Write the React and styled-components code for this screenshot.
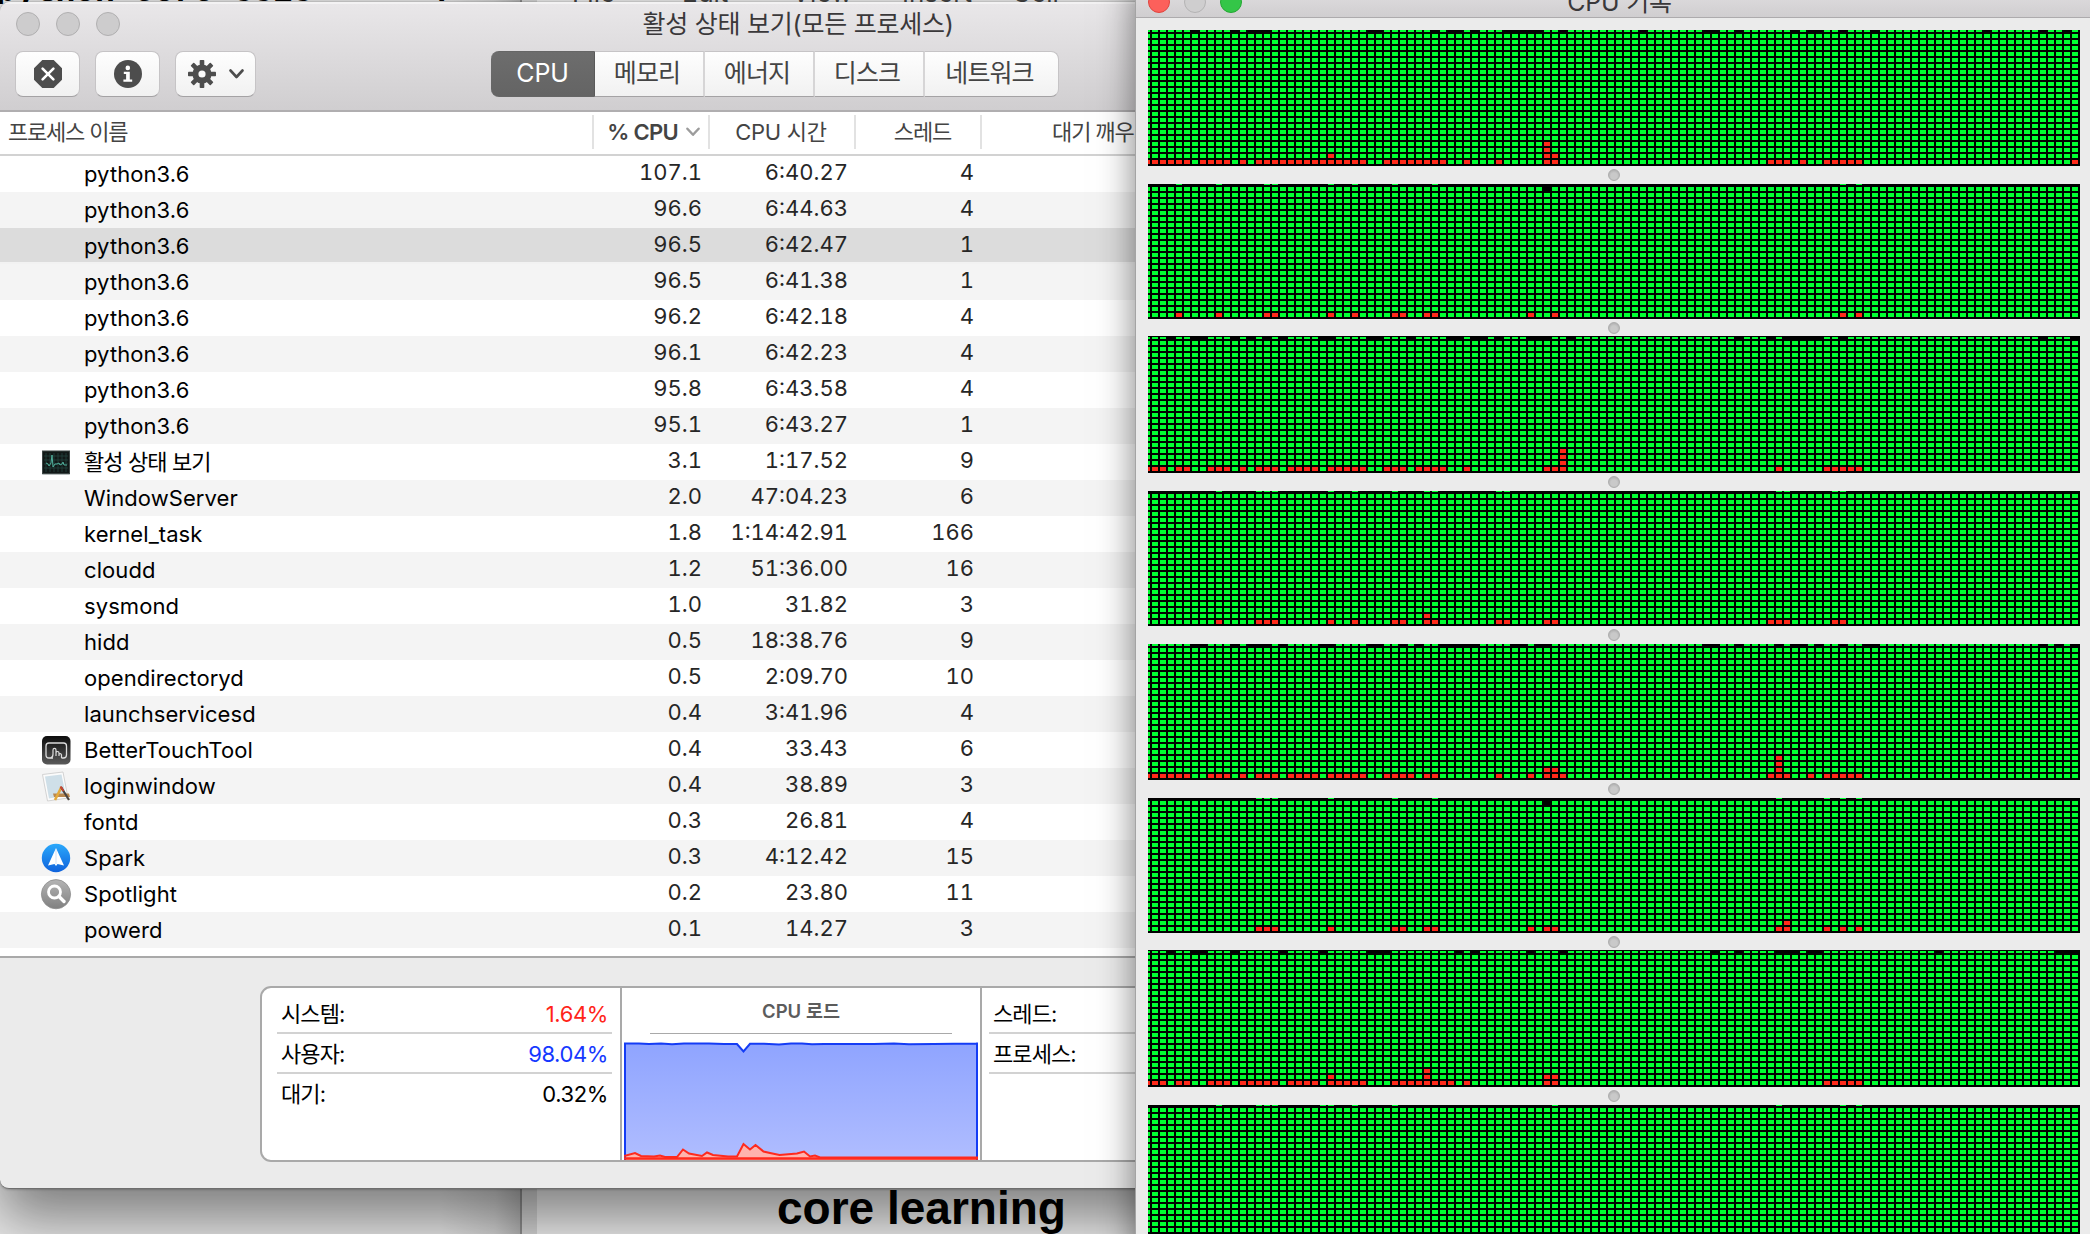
import React from "react";
import styled, { createGlobalStyle, css } from "styled-components";

const GlobalStyle = createGlobalStyle`
  *, *::before, *::after { box-sizing: border-box; }
  html, body { margin: 0; padding: 0; width: 2090px; height: 1234px; overflow: hidden; }
  body { font-family: Inter, "Noto Sans CJK KR", sans-serif; color: #000; }
`;

/* ---------- desktop and the pages behind the windows ---------- */

const Desktop = styled.div`
  position: relative;
  display: flex;
  width: 2090px;
  height: 1234px;
  overflow: hidden;
  background: #dedede;
`;

const BackPage = styled.div`
  display: flex;
  flex-direction: column;
  justify-content: space-between;
  width: 522px;
  flex: none;
  background: linear-gradient(90deg, #e8e8e8 0 440px, #d2d2d2 495px, #b4b4b4 521px);
  border-right: 2px solid #8d8d8d;
`;

const BackText = styled.div`
  height: 4px;
  margin-left: -4px;
  overflow: hidden;
  white-space: pre;
  font: bold 33px/33px "Liberation Mono", monospace;
  & > span { display: block; margin-top: -24px; }
`;

const FrontPage = styled.div`
  display: flex;
  flex-direction: column;
  justify-content: space-between;
  flex: 1;
  background: linear-gradient(90deg, #d4d4d4 0 15px, #eeeeee 15px);
`;

const MenuStrip = styled.div`
  display: flex;
  height: 3px;
  overflow: hidden;
  padding-left: 50px;
  color: #444;
  font-size: 26px;
  line-height: 26px;
  & > span { width: 110px; margin-top: -20px; }
`;

const Heading = styled.div`
  padding: 0 0 3px 255px;
  white-space: nowrap;
  font: bold 46px/46px "Liberation Sans", Arial, sans-serif;
`;

/* ---------- shared window parts ---------- */

const Window = styled.section`
  position: absolute;
  display: flex;
  flex-direction: column;
  overflow: hidden;
  background: #ebebeb;
`;

const MonitorWindow = styled(Window)`
  left: 0;
  top: 2px;
  width: 1594px;
  height: 1187px;
  border-radius: 10px 10px 9px 9px;
  border-bottom: 1px solid #6e6e6e;
  box-shadow: 0 30px 56px rgba(0, 0, 0, 0.46), 0 0 3px rgba(0, 0, 0, 0.4);
`;

const HistoryWindow = styled(Window)`
  left: 1135px;
  top: -26px;
  width: 960px;
  height: 1300px;
  border-left: 1px solid #a4a4a4;
  box-shadow: 0 10px 34px rgba(0, 0, 0, 0.5);
`;

const Lights = styled.div`
  display: flex;
  gap: ${(p) => p.$gap}px;
`;

const Light = styled.span`
  width: ${(p) => p.$size}px;
  height: ${(p) => p.$size}px;
  border-radius: 50%;
  background: ${(p) => p.$fill};
  border: 1px solid ${(p) => p.$edge};
`;

const Title = styled.h1`
  margin: 0;
  font-weight: 400;
  color: #3a383a;
  white-space: nowrap;
`;

/* ---------- activity monitor: title bar ---------- */

const Chrome = styled.header`
  height: 110px;
  flex: none;
  display: flex;
  flex-direction: column;
  background: linear-gradient(#e9e7e9, #d0ced0);
  border-top: 2px solid #f3f2f3;
  border-bottom: 2px solid #b0aeb0;
`;

const TitleRow = styled.div`
  display: grid;
  grid-template-columns: 200px 1fr 200px;
  height: 47px;
  padding: 8px 0 0 16px;
  margin-right: 16px;
`;

const MonitorTitle = styled(Title)`
  font-size: 25px;
  line-height: 25px;
  letter-spacing: -0.25px;
  padding-left: 2px;
  text-align: center;
`;

const Toolbar = styled.div`
  display: flex;
  align-items: flex-start;
  padding-left: 15px;
  gap: 16px;
`;

const raised = css`
  background: linear-gradient(#fefefe, #f1f1f1);
  border: 1px solid #c6c4c6;
  border-bottom-color: #a4a2a4;
`;

const ToolButton = styled.button`
  ${raised}
  width: ${(p) => (p.$wide ? 81 : 65)}px;
  margin-right: -1px;
  height: 46px;
  padding: 0;
  border-radius: 8px;
  display: flex;
  align-items: center;
  justify-content: center;
  gap: 13px;
`;

const Tabs = styled.div`
  display: flex;
  height: 46px;
  margin-left: 220px;
`;

const Tab = styled.button`
  ${raised}
  width: ${(p) => p.$w}px;
  padding: 0 4px 3px 0;
  border-left-width: 0;
  border-right: 2px solid #d6d5d6;
  color: #444;
  font: 400 25px/40px Inter, "Noto Sans CJK KR", sans-serif;
  letter-spacing: -0.9px;
  &:first-child { border-radius: 8px 0 0 8px; }
  &:last-child { border-radius: 0 8px 8px 0; border-right: 1px solid #c6c4c6; }
  ${(p) => p.$on && css`
    background: linear-gradient(#6d6d6d, #646464);
    border-color: #666;
    border-right: 1px solid #5a5a5a;
    padding-right: 0;
    letter-spacing: -0.1px;
    color: #fff;
  `}
`;

/* ---------- activity monitor: process table ---------- */

const Table = styled.div`
  display: flex;
  flex-direction: column;
  height: 844px;
  flex: none;
  overflow: hidden;
  background: #fff;
`;

const columns = css`
  display: grid;
  grid-template-columns: 594px 116px 146px 126px 1fr;
`;

const HeadRow = styled.div`
  ${columns}
  height: 44px;
  flex: none;
  border-bottom: 2px solid #d2d2d2;
  padding: 3px 0 5px;
  color: #444;
  font-size: 22px;
  line-height: 32px;
  white-space: nowrap;
`;

const HeadCell = styled.div`
  display: flex;
  align-items: center;
  justify-content: ${(p) => p.$align || "center"};
  gap: 8px;
  padding: ${(p) => p.$pad || "0"};
  border-right: 2px solid #e2e2e2;
  letter-spacing: ${(p) => p.$track || 0}px;
  font-weight: ${(p) => (p.$bold ? 600 : 400)};
`;

const Row = styled.div`
  ${columns}
  height: 36px;
  flex: none;
  font-size: 22px;
  background: ${(p) => (p.$selected ? "#dcdcdc" : p.$odd ? "#f4f4f4" : "#fff")};
  border-bottom: ${(p) => (p.$selected ? "2px solid #f2f2f2" : "0")};
`;

const NameCell = styled.div`
  display: grid;
  grid-template-columns: 44px 1fr;
  padding-left: 40px;
  line-height: 37px;
  white-space: nowrap;
  letter-spacing: ${(p) => (p.$korean ? -0.9 : 0.08)}px;
`;

const IconSlot = styled.span`
  display: flex;
  align-items: center;
  width: 32px;
  height: 36px;
`;

const NumCell = styled.div`
  text-align: right;
  padding-right: 8px;
  color: #262626;
  line-height: 33px;
  font-variant-numeric: tabular-nums;
`;

/* ---------- activity monitor: summary ---------- */

const Footer = styled.footer`
  flex: 1;
  border-top: 2px solid #a9a9a9;
  padding: 28px 260px 26px;
  display: flex;
`;

const Summary = styled.div`
  display: grid;
  grid-template-columns: 360px 360px 1fr;
  flex: 1;
  border: 2px solid #a9a9a9;
  border-radius: 11px;
  background: #fff;
  overflow: hidden;
`;

const StatList = styled.div`
  padding: ${(p) => (p.$side ? "6px 8px 0 7px" : "6px 8px 0 15px")};
  border-right: 2px solid #a9a9a9;
`;

const Stat = styled.div`
  display: flex;
  justify-content: space-between;
  height: 40px;
  padding: 0 4px 0 4px;
  border-bottom: ${(p) => (p.$last ? "0" : "2px solid #d2d2d2")};
  font-size: 22px;
  line-height: 40px;
  letter-spacing: -0.9px;
  color: #000;
  & > b { font-weight: 400; letter-spacing: -0.4px; color: ${(p) => p.$color || "#000"}; }
`;

const LoadPanel = styled.div`
  display: flex;
  flex-direction: column;
  align-items: center;
  border-right: 2px solid #a9a9a9;
`;

const LoadTitle = styled.div`
  width: 302px;
  height: 46px;
  border-bottom: 1px solid #a9a9a9;
  text-align: center;
  font-size: 18.5px;
  font-weight: 600;
  line-height: 46px;
  color: #5c5c5c;
`;

const LoadGraph = styled.svg`
  display: block;
  width: 354px;
  height: 118px;
  margin-top: 8px;
`;

/* ---------- CPU history window ---------- */

const HistoryBar = styled.header`
  display: grid;
  grid-template-columns: 200px 1fr 200px;
  height: 44px;
  flex: none;
  padding: 17px 4px 0 12px;
  background: linear-gradient(#e9e7e9, #d0ced0);
  border-bottom: 1px solid #adabad;
`;

const HistoryTitle = styled(Title)`
  font-size: 25px;
  line-height: 23px;
  letter-spacing: -0.2px;
  text-align: center;
`;

const Graphs = styled.div`
  display: flex;
  flex-direction: column;
  padding: 12px 0 0 12px;
`;

const Cells = styled.svg`
  display: block;
  flex: none;
  width: 932px;
`;

const Splitter = styled.div`
  height: ${(p) => p.$h}px;
  flex: none;
  width: 932px;
  padding-top: 3px;
  display: flex;
  justify-content: center;
`;

const Knob = styled.span`
  width: 12px;
  height: 12px;
  border-radius: 50%;
  background: radial-gradient(circle at 50% 60%, #c9c9c9 40%, #b0b0b0 80%);
  border: 1px solid #adadad;
`;

/* ---------- data ---------- */

const expand = (list) =>
  list.split(",").flatMap((part) => {
    const [a, b = a] = part.split("-").map(Number);
    return Array.from({ length: b - a + 1 }, (_, i) => a + i);
  });

const invert = (list) => {
  const off = new Set(expand(list));
  return Array.from({ length: 117 }, (_, i) => i).filter((i) => !off.has(i));
};

const CORES = [
  {
    h: 136, gap: 18,
    top: invert("6,11,13-15,28,29,36,38,39,41,45-49,52,62,70,71,74,81,83,84,87,91,105,112,115"),
    red: expand("0-5,7-10,12,14-27,30-37,40,44,50,51,78-80,82,85-89,116"),
    tall: { 23: 2, 50: 4, 51: 2 },
  },
  {
    h: 135, gap: 17,
    top: expand("4,9,15,16,23,26,31,36,87,89"),
    red: expand("4,9,15,16,23,26,31,32,35,36,48,51,87,89"),
    tall: {}, hole: 50,
  },
  {
    h: 137, gap: 18,
    top: invert("3,6,7,11,13,15,17,22,23,28,29,33,38,39,41,42,44,48-50,53,74,78,80-84,87,112,116"),
    red: expand("0-2,4,5,8-10,12,14-16,18-21,23-27,30-32,34-37,40,50-52,79,85-89"),
    tall: { 52: 4 },
  },
  {
    h: 135, gap: 18,
    top: expand("9,14-16,23,26,31,35,36,44,45,79,80,86,87"),
    red: expand("9,14-16,23,26,31,32,35,36,44,45,50,51,78-80,86,87"),
    tall: { 35: 2 },
  },
  {
    h: 136, gap: 18,
    top: invert("6,7,11,13-15,17,22,23,28,29,32,34,37-41,46,47,49,50,70,71,74,79,81,82,84,87,90,91,112,114,116"),
    red: expand("0-5,8-10,12,14-16,18-21,23-27,30-33,35,36,44,48,50-52,78-80,83,85-89"),
    tall: { 50: 2, 51: 2, 79: 4 },
  },
  {
    h: 135, gap: 17,
    top: expand("14-16,23,31,36,79,85,87,89"),
    red: expand("14-16,23,31,32,35,36,48,50,51,79,80,85,87,89"),
    tall: { 80: 2 }, hole: 50,
  },
  {
    h: 137, gap: 18,
    top: invert("3,6,7,11,17,22,28-30,39,41,48,52,71,74,79-81,83,84,99,114-116"),
    red: expand("0-2,4,5,8-10,12-16,18-21,23-27,31-38,40,50,51,85-89"),
    tall: { 23: 2, 35: 3, 50: 2, 51: 2 },
  },
  {
    h: 135, gap: 0,
    top: expand("9,14-16,22,23,26,31,51,79,87,89"),
    red: [], tall: {},
  },
];

const PROCESSES = [
  ["python3.6", "107.1", "6:40.27", "4"],
  ["python3.6", "96.6", "6:44.63", "4"],
  ["python3.6", "96.5", "6:42.47", "1"],
  ["python3.6", "96.5", "6:41.38", "1"],
  ["python3.6", "96.2", "6:42.18", "4"],
  ["python3.6", "96.1", "6:42.23", "4"],
  ["python3.6", "95.8", "6:43.58", "4"],
  ["python3.6", "95.1", "6:43.27", "1"],
  ["활성 상태 보기", "3.1", "1:17.52", "9", "monitor"],
  ["WindowServer", "2.0", "47:04.23", "6"],
  ["kernel_task", "1.8", "1:14:42.91", "166"],
  ["cloudd", "1.2", "51:36.00", "16"],
  ["sysmond", "1.0", "31.82", "3"],
  ["hidd", "0.5", "18:38.76", "9"],
  ["opendirectoryd", "0.5", "2:09.70", "10"],
  ["launchservicesd", "0.4", "3:41.96", "4"],
  ["BetterTouchTool", "0.4", "33.43", "6", "touch"],
  ["loginwindow", "0.4", "38.89", "3", "login"],
  ["fontd", "0.3", "26.81", "4"],
  ["Spark", "0.3", "4:12.42", "15", "spark"],
  ["Spotlight", "0.2", "23.80", "11", "spotlight"],
  ["powerd", "0.1", "14.27", "3"],
];

/* ---------- icons ---------- */

const ICONS = {
  monitor: (
    <svg width="32" height="28" viewBox="0 0 32 28">
      <rect x="2" y="3.5" width="28" height="23.5" rx="1" fill="#b9bfbf" />
      <rect x="2.5" y="3" width="27" height="22.5" fill="#111817" stroke="#3d4645" />
      <path d="M6 5v19M10 5v19M14 5v19M18 5v19M22 5v19M26 5v19M4 8h24M4 12h24M4 16h24M4 20h24" stroke="#23443f" strokeWidth=".8" />
      <path d="M6 15l2 1 1 2 2-3 1-8 1 12 2-3 2 0 2-1 1 2 2-1 1-2 1 3 3 0" fill="none" stroke="#4fae9a" strokeWidth="1" />
    </svg>
  ),
  touch: (
    <svg width="32" height="32" viewBox="0 0 32 32">
      <defs>
        <linearGradient id="touchFill" x2="0" y2="1">
          <stop offset="0" stopColor="#0c0c0c" />
          <stop offset="1" stopColor="#5a5a5a" />
        </linearGradient>
      </defs>
      <rect x="2" y="2" width="28.5" height="28.5" rx="5" fill="url(#touchFill)" />
      <path d="M13 24H9q-3 0-3-3v-9q0-3 3-3h14.500q3 0 3 3v9q0 3-3 3h-2" fill="none" stroke="#dcdcdc" strokeWidth="1.300" />
      <path d="M10.500 24q2.500-.5 2.500-4v-4q0-1.600 1.500-1.600t1.500 1.600v6M16 19q0-1.500 1.500-1.500t1.500 1.500v3M19 20q2-1 2.500 1v3" fill="none" stroke="#dcdcdc" strokeWidth="1.200" />
    </svg>
  ),
  login: (
    <svg width="32" height="32" viewBox="0 0 32 32">
      <path d="M2.500 4.500L23 2l5 26-20.500 3z" fill="#fbfbfb" stroke="#c9c9c9" strokeWidth=".8" />
      <path d="M5 6.500L21.500 4.500l4.300 21-16.800 3z" fill="#cfdfe8" />
      <path d="M13 23.500h16l1 3.500H14z" fill="#b98850" />
      <path d="M21.500 17l-6.500 13" stroke="#e3a93c" strokeWidth="2.600" />
      <path d="M21 17l8 13" stroke="#4a4441" strokeWidth="2.200" />
      <path d="M20.500 16.500l3 4.500" stroke="#c74432" strokeWidth="2" />
    </svg>
  ),
  spark: (
    <svg width="32" height="32" viewBox="0 0 32 32">
      <defs>
        <linearGradient id="sparkFill" x2="0" y2="1">
          <stop offset="0" stopColor="#2aa8fb" />
          <stop offset="1" stopColor="#0f62dc" />
        </linearGradient>
      </defs>
      <circle cx="16" cy="16" r="14.200" fill="url(#sparkFill)" />
      <path d="M16 6l8 17.500-6.500-1.500L16 24l-1.500-2L8 23.500z" fill="#fff" />
      <path d="M16 8v14" stroke="#cfe0f7" />
    </svg>
  ),
  spotlight: (
    <svg width="32" height="32" viewBox="0 0 32 32">
      <defs>
        <linearGradient id="spotFill" x2="0" y2="1">
          <stop offset="0" stopColor="#b4b4b4" />
          <stop offset="1" stopColor="#808080" />
        </linearGradient>
      </defs>
      <circle cx="16" cy="16.200" r="14.600" fill="url(#spotFill)" stroke="#8d8d8d" strokeWidth=".8" />
      <circle cx="14.500" cy="14" r="6" fill="none" stroke="#fff" strokeWidth="2.800" />
      <path d="M19 18.500l5 5" stroke="#fff" strokeWidth="3.400" strokeLinecap="round" />
    </svg>
  ),
};

const StopIcon = () => (
  <svg width="28" height="28" viewBox="0 0 28 28">
    <path d="M8.300 0h11.400L28 8.300v11.400L19.700 28H8.300L0 19.700V8.300z" fill="#4d4d4d" />
    <path d="M8.600 8.600l10.800 10.800M19.400 8.600L8.600 19.400" stroke="#fff" strokeWidth="2.600" strokeLinecap="round" />
  </svg>
);

const InfoIcon = () => (
  <svg width="28" height="28" viewBox="0 0 28 28">
    <circle cx="14" cy="14" r="14" fill="#4d4d4d" />
    <circle cx="13.800" cy="7.900" r="2.300" fill="#fff" />
    <path d="M9.800 11.800h6v7.700h2.400v2.300H9.400v-2.300h2.700v-5.400H9.800z" fill="#fff" />
  </svg>
);

const GearIcon = () => (
  <svg width="28" height="28" viewBox="-14 -14 28 28">
    {[0, 45, 90, 135].map((a) => (
      <rect key={a} x="-2.300" y="-14" width="4.600" height="28" rx=".8" fill="#4d4d4d" transform={`rotate(${a})`} />
    ))}
    <circle r="9.600" fill="#4d4d4d" />
    <circle r="3.600" fill="#fafafa" />
  </svg>
);

const Chevron = ({ color, w = 15 }) => (
  <svg width={w} height="10" viewBox="0 0 15 10">
    <path d="M1.500 1.500L7.500 8l6-6.500" fill="none" stroke={color} strokeWidth="2.600" strokeLinecap="round" strokeLinejoin="round" />
  </svg>
);

/* ---------- components ---------- */

function CoreGraph({ core, id }) {
  const { h, top, red, tall, hole } = core;
  const topY = Math.max(h - 136, 0);
  return (
    <Cells height={h} viewBox={`0 0 932 ${h}`} shapeRendering="crispEdges">
      <defs>
        <pattern id={id} x="-4" y={h - 6} width="8" height="6" patternUnits="userSpaceOnUse">
          <rect width="6" height="4" fill="#00ff31" />
        </pattern>
      </defs>
      <rect width="932" height={h} fill="#000" />
      <rect y={h - 132} width="932" height="132" fill={`url(#${id})`} />
      {top.map((k) => (
        <rect key={`t${k}`} x={8 * k - 4} y={topY} width="6" height={h - 134 - topY} fill="#00ff31" />
      ))}
      {hole && <rect x={8 * hole - 4} y={h - 132} width="6" height="4" fill="#000" />}
      {red.flatMap((k) =>
        Array.from({ length: tall[k] || 1 }, (_, r) => (
          <rect key={`r${k}-${r}`} x={8 * k - 4} y={h - 6 - 6 * r} width="6" height="4" fill="#ff2a1a" />
        ))
      )}
    </Cells>
  );
}

const USER_LINE = "0,1.500 15,1.500 25,2 37,1.500 48,2.200 60,1.500 85,1.500 100,2 113,2 119.500,9.500 126,1.800 140,1.800 155,2.400 167,1.500 178,1.500 188,2.200 200,2 250,2 270,1.500 285,2.200 310,2 330,1.800 354,1.500";
const SYSTEM_LINE = "0,114 11,111 17,114 30,114.500 36,113.500 41,115 53,115 59,107.500 65,111.500 78,114 83,110.500 89,113 104,114.500 113,114.500 119.500,102 126,107.500 131.500,103 139.500,109.500 146,111 155.500,113 173,111.500 180,109.500 186,114.500 191,113.500 196,115.500 354,115.500";

function Load() {
  return (
    <LoadGraph viewBox="0 0 354 118">
      <defs>
        <linearGradient id="userFill" x2="0" y2="1">
          <stop offset="0" stopColor="#8fa4ff" />
          <stop offset="1" stopColor="#b0bdff" />
        </linearGradient>
      </defs>
      <polygon points={`0,118 ${USER_LINE} 354,118`} fill="url(#userFill)" />
      <polygon points={`0,118 ${SYSTEM_LINE} 354,118`} fill="#ffb3ad" />
      <polyline points={`1,118 ${USER_LINE.replace("0,", "1,")} 353,1.500 353,118`} fill="none" stroke="#143cf5" strokeWidth="2" />
      <polyline points={SYSTEM_LINE} fill="none" stroke="#ff2a1e" strokeWidth="2" />
      <path d="M0 116.500h354" stroke="#ff2a1e" strokeWidth="2.500" />
    </LoadGraph>
  );
}

const IDLE = { $size: 24, $fill: "#cdcccd", $edge: "#b0afb0" };

function Monitor() {
  return (
    <MonitorWindow>
      <Chrome>
        <TitleRow>
          <Lights $gap={16}>
            <Light {...IDLE} />
            <Light {...IDLE} />
            <Light {...IDLE} />
          </Lights>
          <MonitorTitle>활성 상태 보기(모든 프로세스)</MonitorTitle>
        </TitleRow>
        <Toolbar>
          <ToolButton><StopIcon /></ToolButton>
          <ToolButton><InfoIcon /></ToolButton>
          <ToolButton $wide><GearIcon /><Chevron color="#4d4d4d" /></ToolButton>
          <Tabs>
            <Tab $w={104} $on>CPU</Tab>
            <Tab $w={110}>메모리</Tab>
            <Tab $w={110}>에너지</Tab>
            <Tab $w={110}>디스크</Tab>
            <Tab $w={134}>네트워크</Tab>
          </Tabs>
        </Toolbar>
      </Chrome>
      <Table>
        <HeadRow>
          <HeadCell $align="flex-start" $pad="0 0 1px 8px" $track={-1.2}>프로세스 이름</HeadCell>
          <HeadCell $align="flex-end" $pad="0 8px 0 0" $track={-0.7} $bold>% CPU<Chevron color="#9c9c9c" w={14} /></HeadCell>
          <HeadCell $pad="0 2px 1px 0" $track={-0.3}>CPU 시간</HeadCell>
          <HeadCell $pad="0 0 1px 9px" $track={-1.1}>스레드</HeadCell>
          <HeadCell $align="flex-start" $pad="0 0 1px 70px" $track={-1.1}>대기 깨우기</HeadCell>
        </HeadRow>
        {PROCESSES.map(([name, cpu, time, threads, icon], i) => (
          <Row key={i} $odd={i % 2 === 1} $selected={i === 2}>
            <NameCell $korean={icon === "monitor"}>
              <IconSlot>{icon && ICONS[icon]}</IconSlot>
              <span>{name}</span>
            </NameCell>
            <NumCell>{cpu}</NumCell>
            <NumCell>{time}</NumCell>
            <NumCell>{threads}</NumCell>
          </Row>
        ))}
      </Table>
      <Footer>
        <Summary>
          <StatList>
            <Stat $color="#ff2419">시스템:<b>1.64%</b></Stat>
            <Stat $color="#1538ff">사용자:<b>98.04%</b></Stat>
            <Stat $last>대기:<b>0.32%</b></Stat>
          </StatList>
          <LoadPanel>
            <LoadTitle>CPU 로드</LoadTitle>
            <Load />
          </LoadPanel>
          <StatList $side>
            <Stat>스레드:</Stat>
            <Stat>프로세스:</Stat>
          </StatList>
        </Summary>
      </Footer>
    </MonitorWindow>
  );
}

function History() {
  return (
    <HistoryWindow>
      <HistoryBar>
        <Lights $gap={14}>
          <Light $size={22} $fill="#fc605b" $edge="#e0443e" />
          <Light $size={22} $fill="#cfcecf" $edge="#b4b3b4" />
          <Light $size={22} $fill="#34c648" $edge="#24a833" />
        </Lights>
        <HistoryTitle>CPU 기록</HistoryTitle>
      </HistoryBar>
      <Graphs>
        {CORES.map((core, i) => (
          <React.Fragment key={i}>
            <CoreGraph core={core} id={`core${i}`} />
            {core.gap > 0 && <Splitter $h={core.gap}><Knob /></Splitter>}
          </React.Fragment>
        ))}
      </Graphs>
    </HistoryWindow>
  );
}

export default function App() {
  return (
    <>
      <GlobalStyle />
      <Desktop>
        <BackPage>
          <BackText><span>python_core_3323      .</span></BackText>
        </BackPage>
        <FrontPage>
          <MenuStrip>
            <span>File</span><span>Edit</span><span>View</span><span>Insert</span><span>Cell</span>
          </MenuStrip>
          <Heading>core learning</Heading>
        </FrontPage>
        <Monitor />
        <History />
      </Desktop>
    </>
  );
}
